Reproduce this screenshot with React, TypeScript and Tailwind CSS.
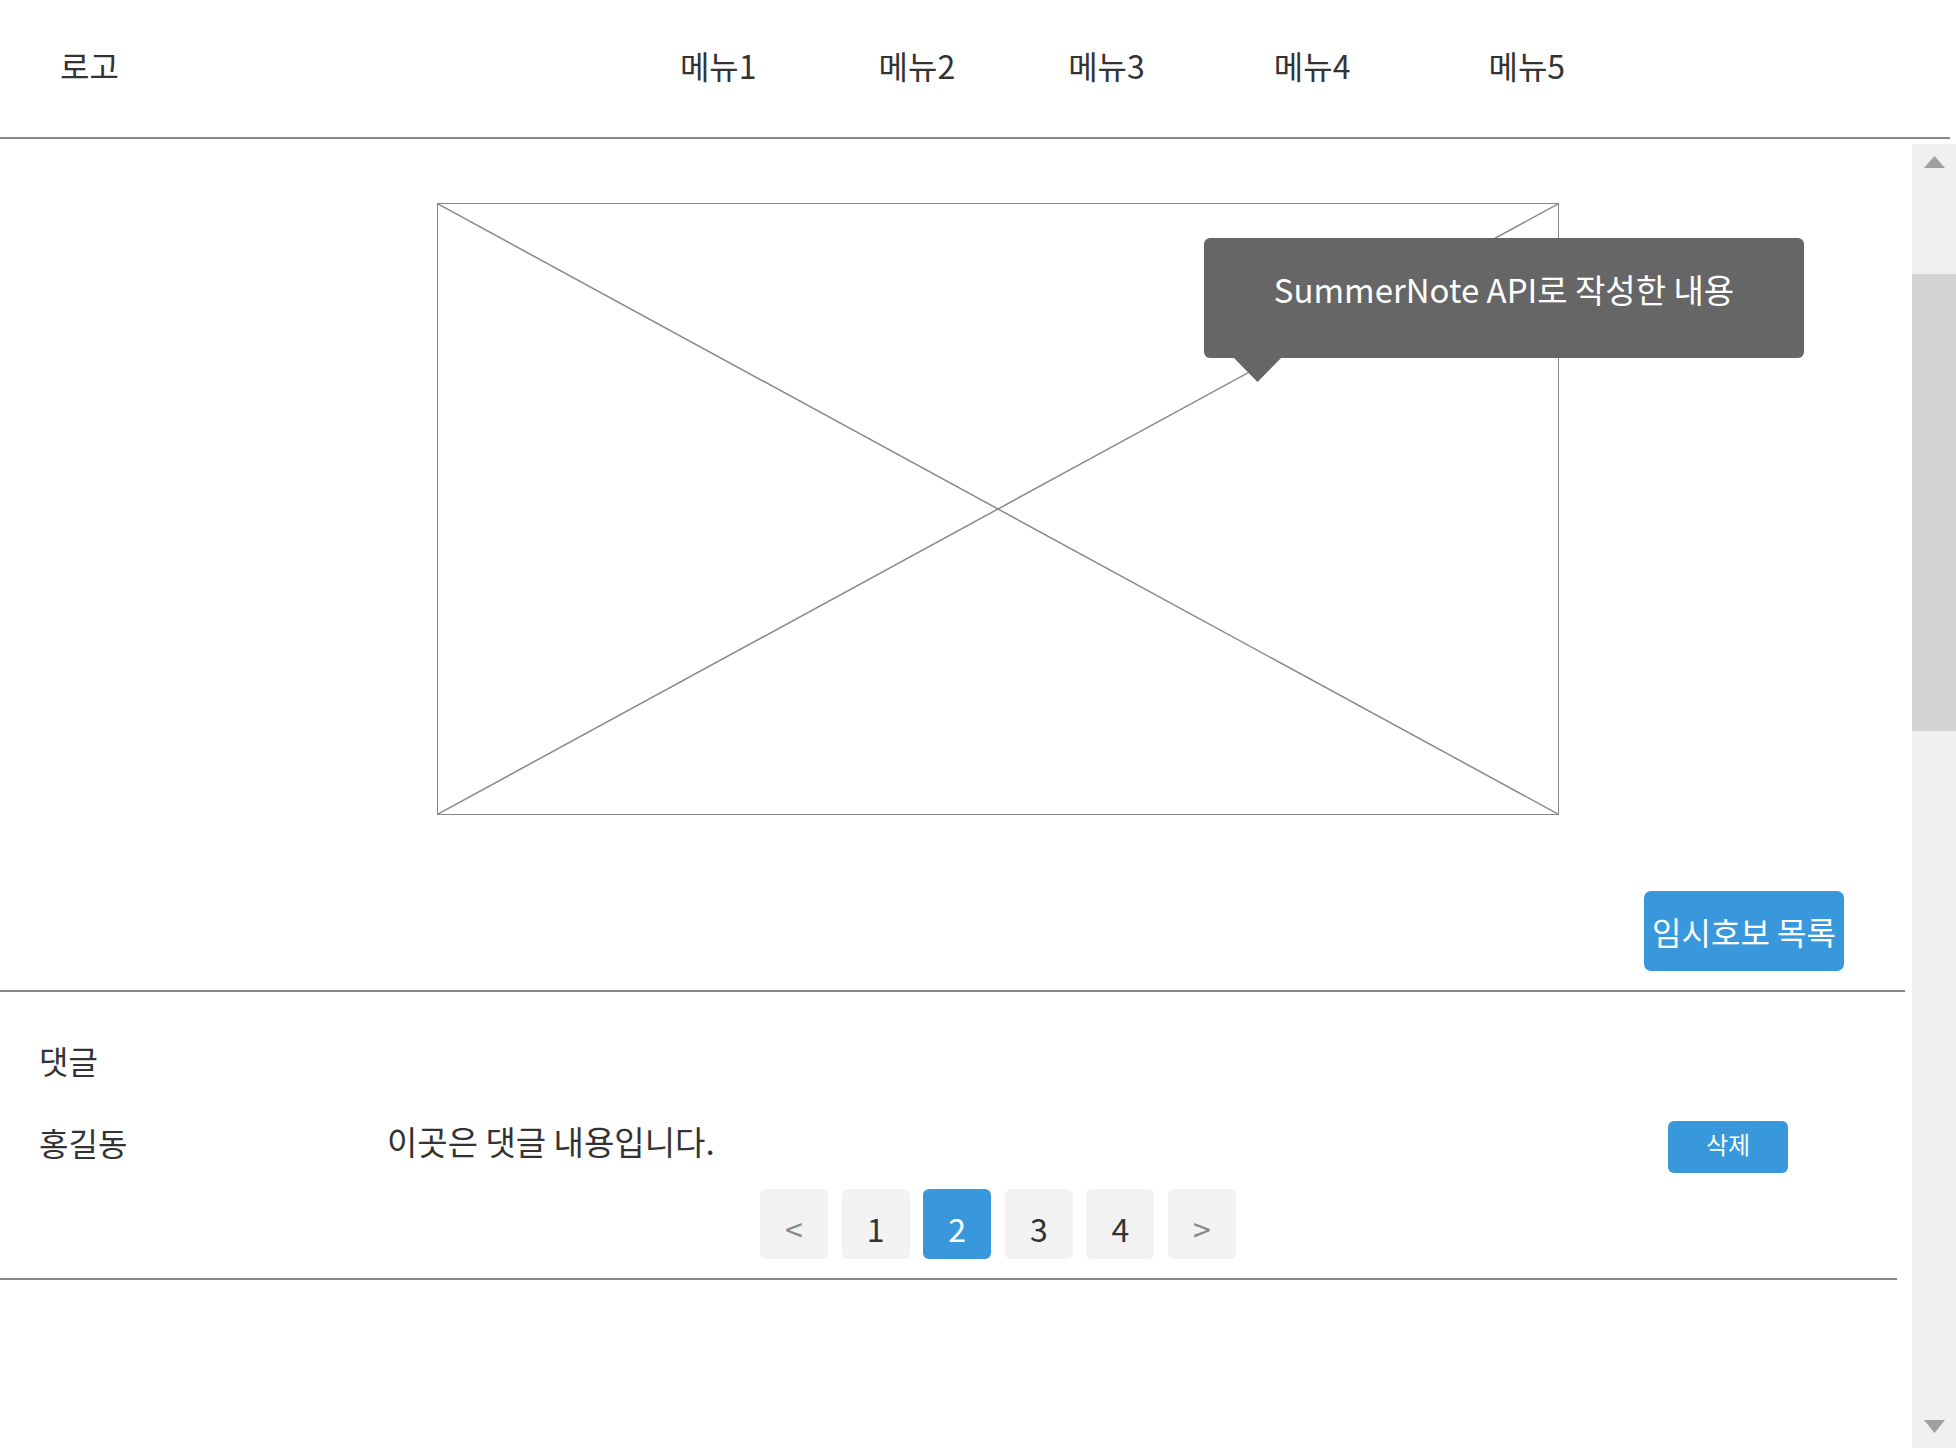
// App.tsx
export default function App() {
  const menus = [
    { label: "메뉴1", ml: "ml-[561px]" },
    { label: "메뉴2", ml: "ml-[122px]" },
    { label: "메뉴3", ml: "ml-[113px]" },
    { label: "메뉴4", ml: "ml-[129px]" },
    { label: "메뉴5", ml: "ml-[138px]" },
  ];
  const pages = ["<", "1", "2", "3", "4", ">"];

  return (
    <div
      className="w-[1956px] h-[1448px] bg-white overflow-hidden text-[#333]"
      style={{ fontFamily: '"Noto Sans CJK KR", "Noto Sans", sans-serif' }}
    >
      {/* 헤더 */}
      <header className="h-[137px] flex items-center pl-[60px] pb-[8px] text-[32px]">
        <span>로고</span>
        {menus.map((m) => (
          <span key={m.label} className={m.ml}>
            {m.label}
          </span>
        ))}
      </header>
      <div className="h-[2px] w-[1950px] bg-[#888]" />

      <div className="flex">
        {/* 본문 */}
        <main className="w-[1912px] flex flex-col">
          {/* 이미지 자리 */}
          <div className="relative ml-[437px] mt-[64px] w-[1122px] h-[612px] border-[1.5px] border-[#888]">
            <svg className="absolute inset-0 w-full h-full" viewBox="0 0 1122 612" preserveAspectRatio="none">
              <line x1="0" y1="0" x2="1122" y2="612" stroke="#888" strokeWidth="1.5" />
              <line x1="1122" y1="0" x2="0" y2="612" stroke="#888" strokeWidth="1.5" />
            </svg>
            {/* 툴팁 */}
            <div className="absolute left-[766px] top-[34px] w-[600px] h-[120px] bg-[#666] rounded-[6px] text-white text-[33px] leading-[44px] flex justify-center pt-[29px] whitespace-nowrap">
              SummerNote API로 작성한 내용
              <svg className="absolute left-[29px] top-[119px]" width="49" height="25" viewBox="0 0 49 25">
                <polygon points="0,0 49,0 24.5,25" fill="#666" />
              </svg>
            </div>
          </div>

          <button className="ml-[1644px] mt-[76px] w-[200px] h-[80px] rounded-[7px] bg-[#3898db] text-white text-[32px] flex items-center justify-center whitespace-nowrap">
            임시호보 목록
          </button>

          <div className="mt-[19px] h-[2px] w-[1905px] bg-[#888]" />

          {/* 댓글 */}
          <div className="pl-[39px] mt-[48px] text-[32px] leading-[40px]">댓글</div>

          <div className="mt-[41px] h-[52px] flex items-center text-[32px]">
            <span className="ml-[39px] w-[348px] pb-[10px]">홍길동</span>
            <span className="w-[1281px] text-[33px] pb-[10px]">이곳은 댓글 내용입니다.</span>
            <button className="w-[120px] h-[52px] rounded-[6px] bg-[#3898db] text-white text-[24px] flex items-center justify-center pb-[6px]">
              삭제
            </button>
          </div>

          {/* 페이지네이션 */}
          <div className="mt-[16px] ml-[760px] flex gap-[13.6px]">
            {pages.map((p) => {
              const active = p === "2";
              const arrow = p === "<" || p === ">";
              return (
                <div
                  key={p}
                  className={
                    "w-[68px] h-[70px] rounded-[6px] flex items-center justify-center pt-[8px] text-[32px] " +
                    (active ? "bg-[#3898db] text-white" : "bg-[#f2f2f2] ") +
                    (arrow ? "text-[#888]" : active ? "" : "text-[#333]")
                  }
                >
                  {p}
                </div>
              );
            })}
          </div>

          <div className="mt-[19px] h-[2px] w-[1897px] bg-[#888]" />
        </main>

        {/* 스크롤바 */}
        <aside className="mt-[5px] w-[44px] h-[1304px] bg-[#f0f0f0] flex flex-col items-center">
          <svg className="mt-[12px]" width="21" height="12" viewBox="0 0 21 12">
            <polygon points="10.5,0 21,12 0,12" fill="#a0a0a0" />
          </svg>
          <div className="mt-[106px] w-full h-[457px] bg-[#d4d4d4]" />
          <svg className="mt-auto mb-[15px]" width="21" height="13" viewBox="0 0 21 13">
            <polygon points="0,0 21,0 10.5,13" fill="#a0a0a0" />
          </svg>
        </aside>
      </div>
    </div>
  );
}
